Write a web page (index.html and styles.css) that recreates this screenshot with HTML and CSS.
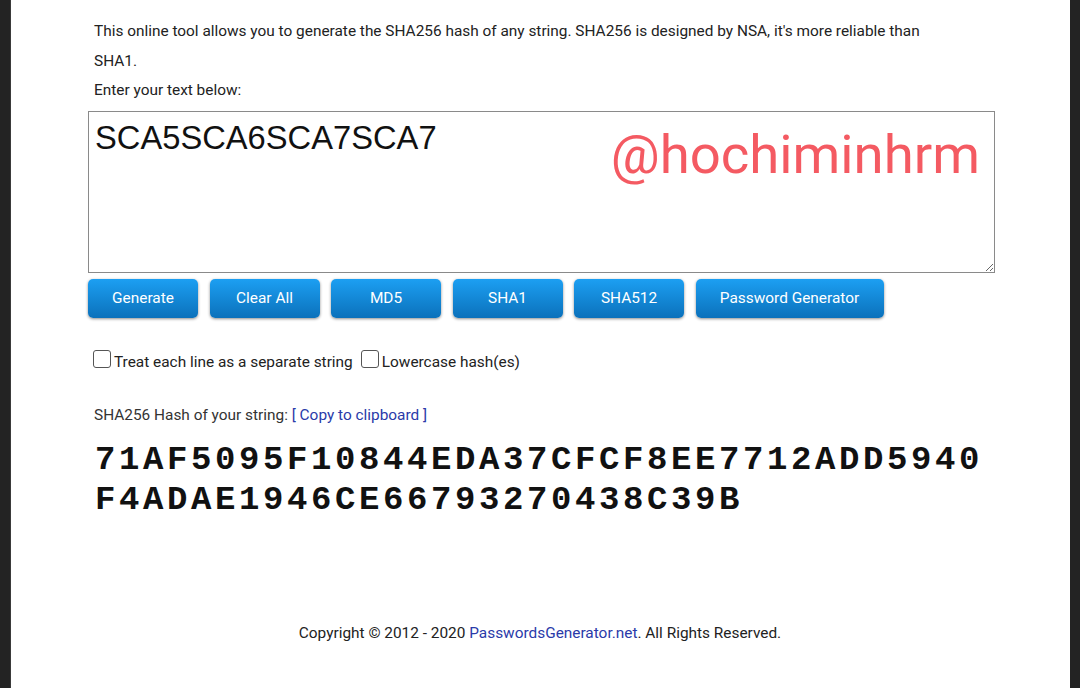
FILE: index.html
```html
<!DOCTYPE html>
<html lang="en">
<head>
<meta charset="utf-8">
<title>SHA256 Hash Generator</title>
<link rel="stylesheet" href="styles.css">
</head>
<body>
<div class="page">
  <main class="content">
    <p class="intro">This online tool allows you to generate the SHA256 hash of any string. SHA256 is designed by NSA, it's more reliable than SHA1.</p>
    <p class="intro">Enter your text below:</p>
    <div class="input-wrap">
      <textarea class="input">SCA5SCA6SCA7SCA7</textarea>
      <span class="watermark">@hochiminhrm</span>
    </div>
    <div class="buttons">
      <button class="btn">Generate</button>
      <button class="btn">Clear All</button>
      <button class="btn">MD5</button>
      <button class="btn">SHA1</button>
      <button class="btn">SHA512</button>
      <button class="btn btn-wide">Password Generator</button>
    </div>
    <div class="options">
      <label class="opt"><span class="box"></span>Treat each line as a separate string</label>
      <label class="opt"><span class="box"></span>Lowercase hash(es)</label>
    </div>
    <p class="result-label">SHA256 Hash of your string: <a class="link" href="#">[ Copy to clipboard ]</a></p>
    <div class="hash">71AF5095F10844EDA37CFCF8EE7712ADD5940F4ADAE1946CE66793270438C39B</div>
    <footer class="footer">Copyright © 2012 - 2020 <a class="link" href="#">PasswordsGenerator.net</a>. All Rights Reserved.</footer>
  </main>
</div>
</body>
</html>
```
FILE: styles.css
```css
html, body {
  margin: 0;
  padding: 0;
  height: 100%;
}
body {
  background: #232323;
  font-family: Roboto, "Liberation Sans", sans-serif;
  font-size: 15.4px;
  color: #222;
}
.page {
  margin: 0 10px;
  height: 688px;
  background: #fff;
  border-left: 1px solid #3a3a3a;
  box-sizing: border-box;
  overflow: hidden;
}
.content {
  padding: 17px 0 0 77px;
  width: 907px;
}
.intro {
  margin: 0;
  padding-left: 6px;
  line-height: 29.5px;
  max-width: 850px;
}
.input-wrap {
  position: relative;
  margin-top: 5px;
  height: 162px;
}
.input {
  display: block;
  box-sizing: border-box;
  width: 907px;
  height: 162px;
  margin: 0;
  border: 1px solid #8a8a8a;
  padding: 7px 6px;
  font-family: "Liberation Sans", Arial, sans-serif;
  font-size: 32.7px;
  color: #111;
  background: #fff;
  resize: both;
  outline: none;
}
.watermark {
  position: absolute;
  right: 15px;
  top: 16px;
  font-family: Roboto, sans-serif;
  font-size: 54.5px;
  line-height: 1;
  color: #f45a62;
  pointer-events: none;
}
.buttons {
  display: flex;
  gap: 11.5px;
  margin-top: 6px;
}
.btn {
  width: 110px;
  height: 39px;
  border: none;
  border-radius: 5px;
  background: linear-gradient(#1c9ff2, #0b71bb);
  color: #fff;
  font-family: Roboto, sans-serif;
  font-size: 15.4px;
  box-shadow: 0 1px 3px rgba(0,0,0,.45);
  padding: 0;
}
.btn-wide {
  width: 188px;
}
.options {
  display: flex;
  gap: 8px;
  margin-top: 33px;
  padding-left: 5px;
  line-height: 22px;
}
.opt {
  display: flex;
  align-items: center;
  gap: 3px;
  color: #222;
}
.box {
  width: 16px;
  height: 16px;
  border: 1px solid #555;
  border-radius: 3px;
  background: #fff;
  margin-top: -5px;
}
.result-label {
  margin: 31px 0 0;
  padding-left: 6px;
  line-height: 22px;
  color: #333;
}
.link {
  color: #2a3aa9;
  text-decoration: none;
}
.hash {
  margin-top: 14px;
  padding-left: 7px;
  width: 900px;
  font-family: "Liberation Mono", "Courier New", monospace;
  font-weight: bold;
  font-size: 34px;
  letter-spacing: 3.6px;
  line-height: 40px;
  word-break: break-all;
  color: #111;
}
.footer {
  margin-top: 102px;
  text-align: center;
  line-height: 22px;
  color: #222;
  padding-right: 3px;
}
```
